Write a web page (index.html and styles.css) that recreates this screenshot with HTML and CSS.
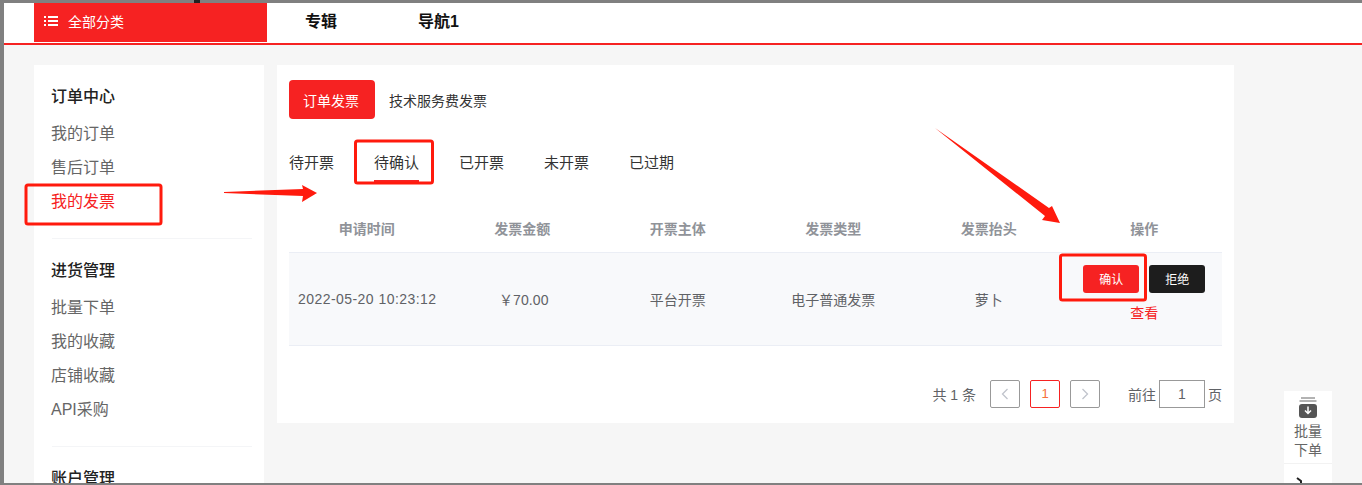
FILE: index.html
```html
<!DOCTYPE html>
<html lang="zh">
<head>
<meta charset="utf-8">
<title>我的发票</title>
<link rel="stylesheet" href="styles.css">
</head>
<body>
<div class="frame">
  <i class="top-mark"></i>
  <header class="header">
    <div class="category">
      <svg class="list-icon" width="14" height="10" viewBox="0 0 14 10"><g fill="#fff"><rect x="0" y="0" width="2" height="2"/><rect x="0" y="4" width="2" height="2"/><rect x="0" y="8" width="2" height="2"/><rect x="4" y="0" width="10" height="2"/><rect x="4" y="4" width="10" height="2"/><rect x="4" y="8" width="10" height="2"/></g></svg>
      <span>全部分类</span>
    </div>
    <nav class="nav"><a>专辑</a><a>导航1</a></nav>
  </header>
  <div class="content">
    <aside class="sidebar">
      <section class="group">
        <h3>订单中心</h3>
        <a>我的订单</a><a>售后订单</a><a class="active">我的发票</a>
      </section>
      <section class="group">
        <h3>进货管理</h3>
        <a>批量下单</a><a>我的收藏</a><a>店铺收藏</a><a>API采购</a>
      </section>
      <section class="group">
        <h3>账户管理</h3>
      </section>
    </aside>
    <main class="card">
      <div class="type-tabs">
        <button class="type-tab on">订单发票</button>
        <button class="type-tab">技术服务费发票</button>
      </div>
      <div class="status-tabs">
        <a>待开票</a><a class="on">待确认</a><a>已开票</a><a>未开票</a><a>已过期</a>
      </div>
      <table class="table">
        <thead>
          <tr><th>申请时间</th><th>发票金额</th><th>开票主体</th><th>发票类型</th><th>发票抬头</th><th>操作</th></tr>
        </thead>
        <tbody>
          <tr>
            <td class="date">2022-05-20 10:23:12</td><td class="amount">￥70.00</td><td>平台开票</td><td>电子普通发票</td><td>萝卜</td>
            <td class="ops">
              <div class="op-btns"><button class="btn red">确认</button><button class="btn dark">拒绝</button></div>
              <a class="view">查看</a>
            </td>
          </tr>
        </tbody>
      </table>
      <div class="pager">
        <span class="total">共 1 条</span>
        <button class="page"><svg width="8" height="12" viewBox="0 0 8 12"><path d="M6.5 1 1.5 6l5 5" fill="none" stroke="#c0c4cc" stroke-width="1.3"/></svg></button>
        <button class="page cur">1</button>
        <button class="page"><svg width="8" height="12" viewBox="0 0 8 12"><path d="M1.5 1l5 5-5 5" fill="none" stroke="#c0c4cc" stroke-width="1.3"/></svg></button>
        <span class="goto">前往</span>
        <input class="page-input" value="1">
        <span class="unit">页</span>
      </div>
    </main>
    <div class="side-tool">
      <div class="tool">
        <svg width="20" height="22" viewBox="0 0 20 22"><path d="M3 1h14M1.500 4h17" stroke="#666" stroke-width="1" fill="none"/><rect x="1" y="7" width="18" height="14" rx="3" fill="#555"/><path d="M10 9.500v7M7 13.500l3 3 3-3" stroke="#fff" stroke-width="1.500" fill="none"/></svg>
        <span>批量<br>下单</span>
      </div>
      <div class="tool-next"><svg width="8" height="8" viewBox="0 0 8 8"><path d="M1 1l4 3v4" stroke="#222" stroke-width="2" fill="none"/></svg></div>
    </div>
  </div>
</div>
<svg class="marks" width="1362" height="485" viewBox="0 0 1362 485">
  <g fill="none" stroke="#ff1a0d" stroke-width="3">
    <rect x="26" y="185" width="135" height="39" rx="2"/>
    <rect x="355.500" y="141" width="77" height="42" rx="2"/>
    <rect x="1060.500" y="255" width="85" height="45" rx="2"/>
  </g>
  <g fill="#ff1a0d">
    <path d="M224 192 303 189 302 185 317 193 302 202 303 196 224 193Z"/>
    <path d="M935 128 1049 208 1052 206 1060 223 1042 220 1045 216Z"/>
  </g>
</svg>
</body>
</html>
```
FILE: styles.css
```css
* { box-sizing: border-box; }
html, body { margin: 0; height: 485px; overflow: hidden; }
body {
  position: relative;
  background: #808080;
  font-family: "Liberation Sans", "Noto Sans CJK SC", sans-serif;
  color: #333;
}
a { display: block; }
button { font-family: inherit; border: 0; padding: 0; }
.frame {
  position: relative;
  height: 480px;
  margin: 3px 0 2px 4px;
  background: #f6f6f6;
  overflow: hidden;
}
.top-mark {
  position: fixed;
  left: 194px;
  top: 0;
  width: 6px;
  height: 3px;
  background: #222;
}
.header {
  display: flex;
  height: 42px;
  padding-left: 30px;
  background: #fff;
  border-bottom: 2px solid #f62222;
}
.category {
  display: flex;
  align-items: center;
  width: 233px;
  height: 39px;
  padding: 0 0 3px 10px;
  background: #f62222;
  color: #fff;
  font-size: 14px;
}
.list-icon { margin-right: 10px; }
.nav { display: flex; gap: 81px; margin-left: 38px; }
.nav a { font-size: 16px; font-weight: 700; line-height: 38px; color: #111; }
.content { display: flex; align-items: flex-start; padding: 20px 0 0 30px; }
.sidebar {
  flex: none;
  width: 230px;
  height: 420px;
  padding: 0 12px 0 18px;
  background: #fff;
}
.group { padding: 15px 0 19px; border-bottom: 1px solid #f4f5f7; }
.group:last-child { border-bottom: 0; }
.group h3 {
  margin: 0 0 3px -1px;
  font-size: 16px;
  font-weight: 500;
  line-height: 34px;
  color: #222;
}
.group a { margin-left: -1px; font-size: 16px; line-height: 34px; color: #666; }
.group a.active { color: #f62222; }
.card {
  flex: none;
  width: 957px;
  height: 358px;
  margin-left: 13px;
  padding: 15px 12px;
  background: #fff;
}
.type-tabs { display: flex; align-items: center; }
.type-tab { height: 39px; font-size: 14px; background: none; color: #333; }
.type-tab.on {
  width: 86px;
  margin-right: 14px;
  padding-right: 2px;
  border-radius: 4px;
  background: #f62222;
  color: #fff;
}
.status-tabs { display: flex; gap: 40px; margin: 24px 0 23px; }
.status-tabs a {
  height: 39px;
  font-size: 15px;
  line-height: 40px;
  color: #333;
}
.status-tabs a.on { border-bottom: 2px solid #f62222; }
.table { width: 933px; border-collapse: collapse; table-layout: fixed; }
.table th {
  height: 47px;
  padding: 0;
  font-size: 14px;
  font-weight: 700;
  color: #909399;
}
.table td {
  height: 93px;
  padding: 0;
  text-align: center;
  font-size: 14px;
  color: #606266;
  background: #f8f9fb;
  border-top: 1px solid #ebeef5;
  border-bottom: 1px solid #ebeef5;
}
.table td.date { padding-left: 1px; letter-spacing: 0.45px; }
.table td.amount { padding-left: 3px; letter-spacing: 0.1px; }
.table td.ops { vertical-align: top; padding-top: 12px; }
.op-btns { display: flex; justify-content: center; gap: 10px; }
.btn { width: 56px; height: 28px; border-radius: 3px; font-size: 12px; color: #fff; }
.btn.red { background: #f62222; }
.btn.dark { background: #1d1d1d; }
.view { margin-top: 10px; line-height: 20px; color: #f62222; }
.pager {
  display: flex;
  align-items: center;
  justify-content: flex-end;
  height: 28px;
  margin-top: 34px;
  font-size: 14px;
  color: #606266;
}
.page {
  display: flex;
  align-items: center;
  justify-content: center;
  width: 30px;
  height: 28px;
  margin-left: 10px;
  background: #fff;
  border: 1px solid #999;
  border-radius: 2px;
  font-size: 13px;
  color: #606266;
}
.total { margin-right: 4px; }
.page.cur { border-color: #f62222; color: #f6703a; }
.goto { margin-left: 28px; }
.page-input {
  width: 46px;
  height: 28px;
  margin: 0 3px 0 3px;
  padding: 0;
  border: 1px solid #999;
  border-radius: 0;
  text-align: center;
  font: inherit;
  color: #606266;
  background: #fff;
}
.side-tool {
  flex: none;
  width: 48px;
  height: 92px;
  margin: 326px 0 0 50px;
  background: #fff;
  overflow: hidden;
}
.tool {
  display: flex;
  flex-direction: column;
  align-items: center;
  height: 73px;
  padding-top: 6px;
  border-bottom: 1px solid #f2f2f2;
  font-size: 14px;
  line-height: 19px;
  text-align: center;
  color: #666;
}
.tool svg { flex: none; margin-bottom: 3px; }
.tool-next { padding: 13px 0 0 12px; line-height: 0; }
.marks { position: absolute; left: 0; top: 0; pointer-events: none; }
```
